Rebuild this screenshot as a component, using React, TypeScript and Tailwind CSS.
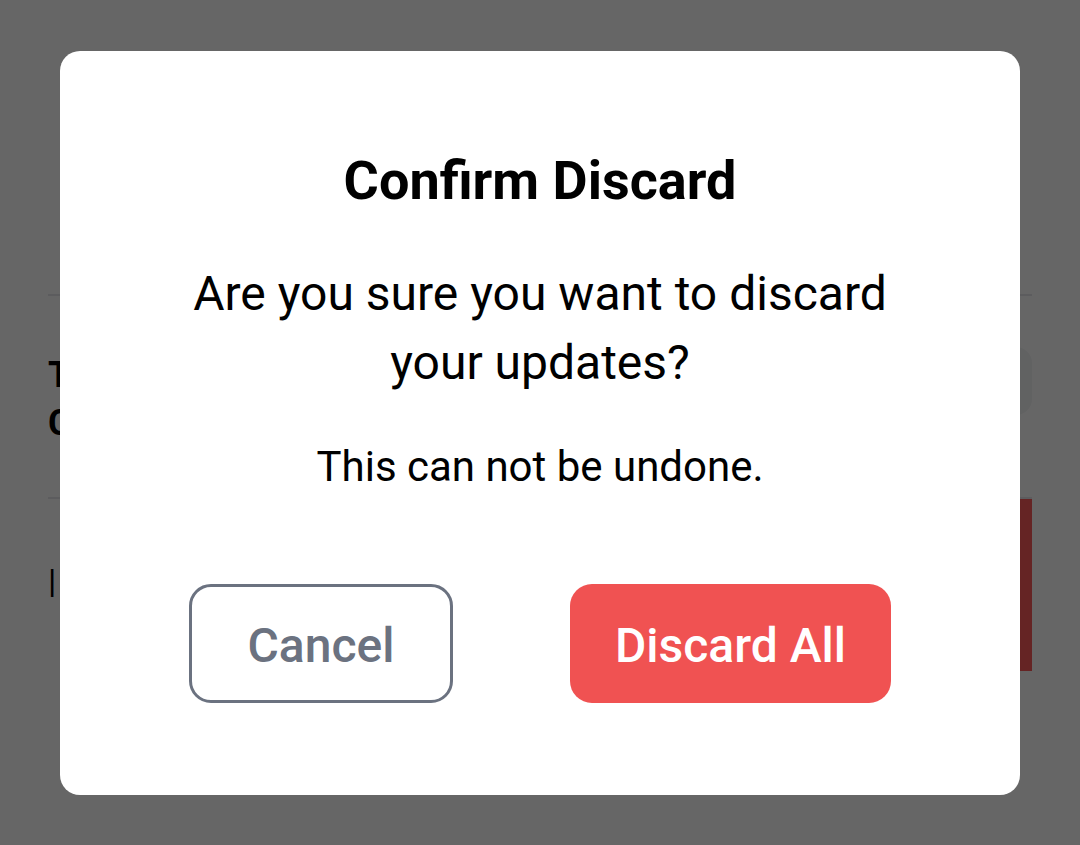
export default function App() {
  return (
    <div className="relative h-[845px] w-[1080px] overflow-hidden bg-white font-['Roboto',sans-serif] text-black">
      {/* page behind the dialog */}
      <div className="flex flex-col px-[48px] pt-[294px]">
        <div className="h-[2px] bg-[#e5e7eb]" />
        <div className="flex h-[201px] items-start justify-between">
          <div className="pt-[55px] text-[36px] font-bold leading-[48px]">
            <p>Title</p>
            <p>Changes</p>
          </div>
          <div className="mt-[51px] h-[68px] w-[200px] rounded-[16px] bg-[#f3f4f6]" />
        </div>
        <div className="h-[2px] bg-[#e5e7eb]" />
        <div className="flex h-[172px] items-start justify-between">
          <p className="pt-[62px] text-[34px] leading-[40px]">|</p>
          <div className="h-[172px] w-[200px] bg-[#fc5a5a]" />
        </div>
      </div>

      {/* overlay */}
      <div className="absolute inset-0 flex items-center justify-center bg-black/60">
        <div className="flex h-[744px] w-[960px] flex-col items-center rounded-[20px] bg-white pt-[98px]">
          <h2 className="text-[54px] font-bold leading-[64px] text-black">
            Confirm Discard
          </h2>
          <p className="mt-[46px] w-[760px] text-center text-[48px] leading-[69px] text-black">
            Are you sure you want to discard your updates?
          </p>
          <p className="mt-[44px] text-[42px] leading-[52px] text-black">
            This can not be undone.
          </p>
          <div className="mt-[91px] flex w-[702px] items-center justify-between">
            <button className="flex h-[119px] w-[264px] items-center justify-center rounded-[22px] border-[3px] border-[#6b7280] bg-white pt-[6px] text-[48px] font-medium text-[#6b7280]">
              Cancel
            </button>
            <button className="flex h-[119px] w-[321px] items-center justify-center rounded-[22px] bg-[#f05252] pt-[6px] text-[48px] font-medium text-white">
              Discard All
            </button>
          </div>
        </div>
      </div>
    </div>
  );
}
